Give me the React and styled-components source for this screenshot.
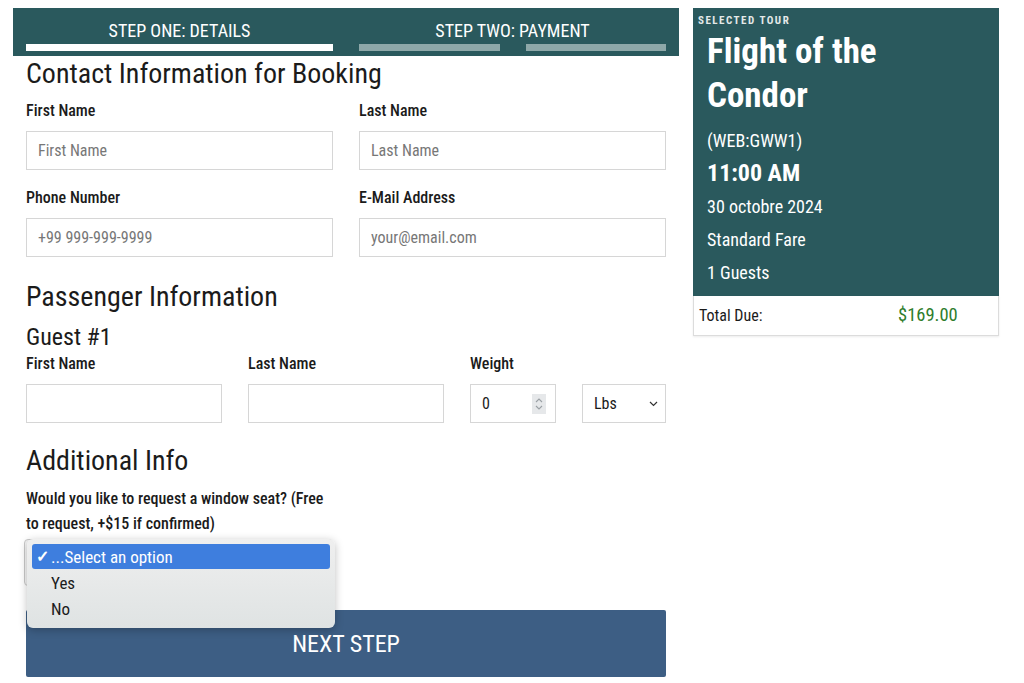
import React from 'react';
import styled, { createGlobalStyle } from 'styled-components';

const GlobalStyle = createGlobalStyle`
  body {
    margin: 0;
    background: #fff;
    font-family: Roboto, "Liberation Sans", sans-serif;
    font-stretch: 87%;
    color: #1b1b1b;
  }
`;

const Page = styled.div`
  display: flex;
  align-items: flex-start;
  gap: 14px;
  padding: 8px 0 0 13px;
`;

const Main = styled.div`
  width: 666px;
`;

const StepBar = styled.div`
  display: grid;
  grid-template-columns: 307px 307px;
  gap: 26px;
  padding: 0 13px 5px;
  height: 48px;
  box-sizing: border-box;
  background: #2a595d;
`;

const Step = styled.div`
  display: flex;
  flex-direction: column;
  justify-content: flex-end;
  color: #fff;
  font-size: 18px;
  text-align: center;
`;

const StepTitle = styled.div`
  line-height: 20px;
  margin-bottom: 3px;
`;

const Bars = styled.div`
  display: flex;
  gap: 26px;
`;

const Bar = styled.div`
  flex: 1;
  height: 7px;
  background: ${p => (p.$active ? '#fff' : '#8ea8a9')};
`;

const Form = styled.div`
  padding: 2px 13px 0;
`;

const Heading = styled.h2`
  margin: ${p => p.$mt || 0}px 0 ${p => (p.$mb === undefined ? 11 : p.$mb)}px;
  font-size: ${p => p.$size || 28}px;
  line-height: ${p => p.$lh || 32}px;
  font-weight: 400;
`;

const Row = styled.div`
  display: grid;
  grid-template-columns: ${p => p.$cols || '307px 307px'};
  gap: 26px;
  margin-bottom: 18px;
`;

const Field = styled.div`
  display: flex;
  flex-direction: column;
  justify-content: flex-end;
`;

const Label = styled.label`
  font-size: 16px;
  font-weight: 500;
  line-height: 20px;
  margin-bottom: 10px;
`;

const Input = styled.input`
  height: 39px;
  box-sizing: border-box;
  border: 1px solid #d6d6d6;
  padding: 0 11px;
  font-family: inherit;
  font-stretch: inherit;
  font-size: 16px;
  color: #333;
  outline: none;
  &::placeholder {
    color: #777;
  }
`;

const NumberBox = styled.div`
  display: flex;
  align-items: center;
  justify-content: space-between;
  height: 39px;
  box-sizing: border-box;
  border: 1px solid #d6d6d6;
  padding: 0 9px 0 11px;
  font-size: 16px;
`;

const Spinner = styled.div`
  width: 14px;
  height: 20px;
  background: #e6e8ea;
  display: flex;
  align-items: center;
  justify-content: center;
`;

const SelectBox = styled.div`
  display: flex;
  align-items: center;
  justify-content: space-between;
  height: 39px;
  box-sizing: border-box;
  border: 1px solid #d6d6d6;
  padding: 0 7px 0 11px;
  font-size: 16px;
`;

const Question = styled.p`
  margin: 0;
  width: 307px;
  font-size: 16px;
  font-weight: 500;
  line-height: 25px;
`;

const Dropdown = styled.div`
  position: relative;
  width: 309px;
  height: 47px;
  margin: 3px 0 24px -2px;
  border: 1px solid #c9c9c9;
  border-radius: 4px;
  box-sizing: border-box;
  background: #f4f4f4;
`;

const Menu = styled.div`
  position: absolute;
  top: -1px;
  left: 2px;
  width: 308px;
  padding: 5px 5px 6px;
  box-sizing: border-box;
  border-radius: 6px;
  background: linear-gradient(#efefef, #dfe3e3);
  box-shadow: 0 2px 8px rgba(0, 0, 0, 0.25);
  z-index: 2;
`;

const Option = styled.div`
  height: 25px;
  display: flex;
  align-items: center;
  padding-left: ${p => (p.$selected ? '4px' : '19px')};
  font-size: 17px;
  border-radius: 3px;
  color: ${p => (p.$selected ? '#fff' : '#1b1b1b')};
  background: ${p => (p.$selected ? '#3e7ede' : 'transparent')};
  margin-bottom: 1px;
`;

const Check = styled.span`
  width: 15px;
  font-size: 16px;
  font-weight: 700;
`;

const NextButton = styled.button`
  display: block;
  width: 640px;
  height: 67px;
  border: none;
  border-radius: 2px;
  background: #3d5e84;
  color: #fff;
  font-family: inherit;
  font-stretch: inherit;
  font-size: 24px;
`;

const Side = styled.div`
  width: 306px;
`;

const TourCard = styled.div`
  background: #2a595d;
  color: #fff;
  padding: 6px 5px 9px;
  height: 288px;
  box-sizing: border-box;
`;

const Eyebrow = styled.div`
  font-size: 11px;
  font-weight: 700;
  letter-spacing: 1.5px;
  color: #e4e9e9;
  line-height: 13px;
`;

const TourBody = styled.div`
  padding: 3px 9px 0;
`;

const TourName = styled.div`
  font-size: 35px;
  font-weight: 700;
  line-height: 44px;
  margin-bottom: 6px;
`;

const TourLine = styled.div`
  font-size: ${p => p.$size || 18}px;
  font-weight: ${p => (p.$bold ? 700 : 400)};
  line-height: 33px;
`;

const TotalRow = styled.div`
  display: grid;
  grid-template-columns: 199px 1fr;
  align-items: center;
  height: 39px;
  padding: 0 5px;
  border: 1px solid #dcdcdc;
  border-top: none;
  box-shadow: 0 1px 2px rgba(0, 0, 0, 0.08);
  font-size: 16px;
`;

const Price = styled.span`
  color: #2e7d2c;
  font-size: 18.5px;
  padding-bottom: 2px;
`;

const App = () => {
    return (
        <>
            <GlobalStyle/>
            <Page>
                <Main>
                    <StepBar>
                        <Step>
                            <StepTitle>STEP ONE: DETAILS</StepTitle>
                            <Bars><Bar $active/></Bars>
                        </Step>
                        <Step>
                            <StepTitle>STEP TWO: PAYMENT</StepTitle>
                            <Bars><Bar/><Bar/></Bars>
                        </Step>
                    </StepBar>
                    <Form>
                        <Heading>Contact Information for Booking</Heading>
                        <Row>
                            <Field><Label>First Name</Label><Input placeholder="First Name"/></Field>
                            <Field><Label>Last Name</Label><Input placeholder="Last Name"/></Field>
                        </Row>
                        <Row>
                            <Field><Label>Phone Number</Label><Input placeholder="+99 999-999-9999"/></Field>
                            <Field><Label>E-Mail Address</Label><Input placeholder="your@email.com"/></Field>
                        </Row>
                        <Heading $mt={24}>Passenger Information</Heading>
                        <Heading $size={24} $lh={28} $mt={-1} $mb={3}>Guest #1</Heading>
                        <Row $cols="196px 196px 86px 1fr">
                            <Field><Label>First Name</Label><Input/></Field>
                            <Field><Label>Last Name</Label><Input/></Field>
                            <Field>
                                <Label>Weight</Label>
                                <NumberBox>
                                    0
                                    <Spinner>
                                        <svg width="8" height="14" viewBox="0 0 8 14" fill="none" stroke="#9aa0a4" strokeWidth="1.1">
                                            <path d="M1 5 L4 2 L7 5"/>
                                            <path d="M1 9 L4 12 L7 9"/>
                                        </svg>
                                    </Spinner>
                                </NumberBox>
                            </Field>
                            <Field>
                                <SelectBox>
                                    Lbs
                                    <svg width="9" height="6" viewBox="0 0 9 6" fill="none" stroke="#333" strokeWidth="1.2">
                                        <path d="M1 1 L4.5 4.5 L8 1"/>
                                    </svg>
                                </SelectBox>
                            </Field>
                        </Row>
                        <Heading $mt={22} $mb={9}>Additional Info</Heading>
                        <Question>Would you like to request a window seat? (Free to request, +$15 if confirmed)</Question>
                        <Dropdown>
                            <Menu>
                                <Option $selected><Check>✓</Check>...Select an option</Option>
                                <Option>Yes</Option>
                                <Option>No</Option>
                            </Menu>
                        </Dropdown>
                        <NextButton>NEXT STEP</NextButton>
                    </Form>
                </Main>
                <Side>
                    <TourCard>
                        <Eyebrow>SELECTED TOUR</Eyebrow>
                        <TourBody>
                            <TourName>Flight of the<br/>Condor</TourName>
                            <TourLine>(WEB:GWW1)</TourLine>
                            <TourLine $size={24} $bold>11:00 AM</TourLine>
                            <TourLine>30 octobre 2024</TourLine>
                            <TourLine>Standard Fare</TourLine>
                            <TourLine>1 Guests</TourLine>
                        </TourBody>
                    </TourCard>
                    <TotalRow>
                        <span>Total Due:</span>
                        <Price>$169.00</Price>
                    </TotalRow>
                </Side>
            </Page>
        </>
    );
}

export default App;
